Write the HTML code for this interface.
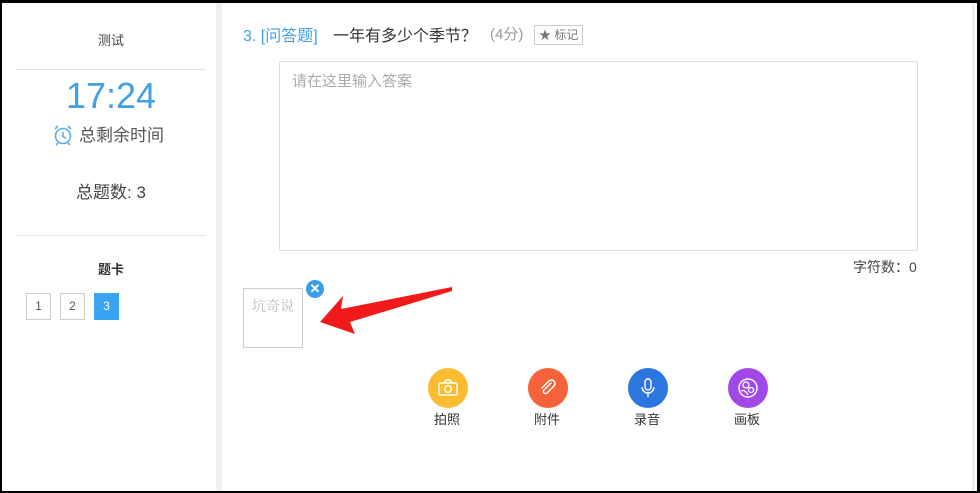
<!DOCTYPE html>
<html><head><meta charset="utf-8"><style>
*{margin:0;padding:0;box-sizing:border-box}
body{width:980px;height:493px;background:#000;position:relative;overflow:hidden;font-family:"Liberation Sans","Noto Sans CJK SC",sans-serif}
.a{position:absolute}
.c{text-align:center}
</style></head><body>
<div class="a" style="left:2px;top:3px;width:975px;height:488px;background:#fff"></div>
<div class="a" style="left:216px;top:3px;width:6px;height:488px;background:#eef0f6"></div>
<div class="a" style="left:972px;top:3px;width:3px;height:488px;background:#eef0f6"></div>

<div class="a c" style="left:16px;top:30px;width:190px;font-size:13px;color:#444">测试</div>
<div class="a" style="left:16px;top:69px;width:190px;height:1px;background:#e2e2e2"></div>
<div class="a c" style="left:16px;top:75px;width:190px;font-size:36px;color:#3fa0e3;line-height:42px">17:24</div>
<div class="a" style="left:53px;top:124px;width:20px;height:22px">
<svg width="20" height="22" viewBox="0 0 20 22"><circle cx="10" cy="12" r="7.5" fill="none" stroke="#5aaee6" stroke-width="1.6"/><path d="M10 8v4.5l3 2M2 5l3-3M18 5l-3-3M5 19l-2 2M15 19l2 2" stroke="#5aaee6" stroke-width="1.6" fill="none"/></svg></div>
<div class="a" style="left:79px;top:121px;font-size:17px;color:#555">总剩余时间</div>
<div class="a c" style="left:16px;top:178px;width:190px;font-size:17px;color:#444">总题数: 3</div>
<div class="a" style="left:16px;top:235px;width:190px;height:1px;background:#e2e2e2"></div>
<div class="a c" style="left:16px;top:259px;width:190px;font-size:13px;color:#333;font-weight:bold">题卡</div>
<div class="a c" style="left:26px;top:293px;width:25px;height:27px;border:1px solid #ccc;font-size:12px;line-height:25px;color:#555">1</div>
<div class="a c" style="left:60px;top:293px;width:25px;height:27px;border:1px solid #ccc;font-size:12px;line-height:25px;color:#555">2</div>
<div class="a c" style="left:94px;top:293px;width:25px;height:27px;background:#3aa3f2;font-size:12px;line-height:27px;color:#fff">3</div>

<div class="a" style="left:243px;top:22px;font-size:16px;color:#3fa0e3;white-space:nowrap">3. [问答题]</div>
<div class="a" style="left:333px;top:22px;font-size:16px;color:#333;white-space:nowrap">一年有多少个季节？</div>
<div class="a" style="left:490px;top:23px;font-size:15px;color:#999">(4分)</div>
<div class="a" style="left:534px;top:25px;width:49px;height:20px;border:1px solid #ccc;font-size:12px;color:#777;line-height:18px;padding-left:4px">★ 标记</div>

<div class="a" style="left:279px;top:61px;width:639px;height:190px;border:1px solid #ddd;border-radius:2px"></div>
<div class="a" style="left:292px;top:70px;font-size:15px;color:#aaa">请在这里输入答案</div>
<div class="a" style="left:853px;top:257px;font-size:14px;color:#444">字符数：0</div>

<div class="a" style="left:243px;top:288px;width:60px;height:60px;border:1px solid #ccc"></div>
<div class="a" style="left:252px;top:296px;font-size:14px;color:#bbb;font-family:'Noto Serif CJK SC',serif">坑奇说</div>
<div class="a c" style="left:306px;top:280px;width:18px;height:18px;border-radius:50%;background:#3a9ee6;color:#fff;font-size:13px;line-height:18px;font-weight:bold">✕</div>
<svg class="a" style="left:0;top:0" width="980" height="493"><polygon points="320,322 343,296 341,309 452,287 452,291 350,322 355,334" fill="#f01a1a"/></svg>

<div class="a" style="left:428px;top:368px;width:40px;height:40px;border-radius:50%;background:#fbbd2f"></div>
<svg class="a" style="left:438px;top:379px" width="20" height="18"><rect x="1" y="4" width="18" height="12" rx="1.5" fill="none" stroke="#fff" stroke-width="1.4"/><path d="M6 4l2-3h4l2 3" fill="none" stroke="#fff" stroke-width="1.4"/><circle cx="10" cy="10" r="3.3" fill="none" stroke="#fff" stroke-width="1.4"/></svg>
<div class="a" style="left:434px;top:409px;font-size:13px;color:#333">拍照</div>

<div class="a" style="left:528px;top:368px;width:40px;height:40px;border-radius:50%;background:#f3623b"></div>
<svg class="a" style="left:538px;top:378px" width="20" height="20"><path d="M13 5l-7 7a2 2 0 0 0 3 3l7-7a3.5 3.5 0 0 0-5-5l-7 7" fill="none" stroke="#fff" stroke-width="1.5" stroke-linecap="round"/></svg>
<div class="a" style="left:534px;top:409px;font-size:13px;color:#333">附件</div>

<div class="a" style="left:628px;top:368px;width:40px;height:40px;border-radius:50%;background:#2d76e0"></div>
<svg class="a" style="left:638px;top:377px" width="20" height="22"><rect x="7" y="2" width="6" height="11" rx="3" fill="none" stroke="#fff" stroke-width="1.4"/><path d="M4 10a6 6 0 0 0 12 0M10 16v4" fill="none" stroke="#fff" stroke-width="1.4"/></svg>
<div class="a" style="left:634px;top:409px;font-size:13px;color:#333">录音</div>

<div class="a" style="left:728px;top:368px;width:40px;height:40px;border-radius:50%;background:#a049e6"></div>
<svg class="a" style="left:737px;top:377px" width="22" height="22"><circle cx="11" cy="11" r="9" fill="none" stroke="#fff" stroke-width="1.4"/><circle cx="9" cy="8" r="3" fill="none" stroke="#fff" stroke-width="1.3"/><circle cx="14" cy="13" r="2.5" fill="none" stroke="#fff" stroke-width="1.3"/><path d="M4 14q4-2 7 4" fill="none" stroke="#fff" stroke-width="1.3"/></svg>
<div class="a" style="left:734px;top:409px;font-size:13px;color:#333">画板</div>
</body></html>
